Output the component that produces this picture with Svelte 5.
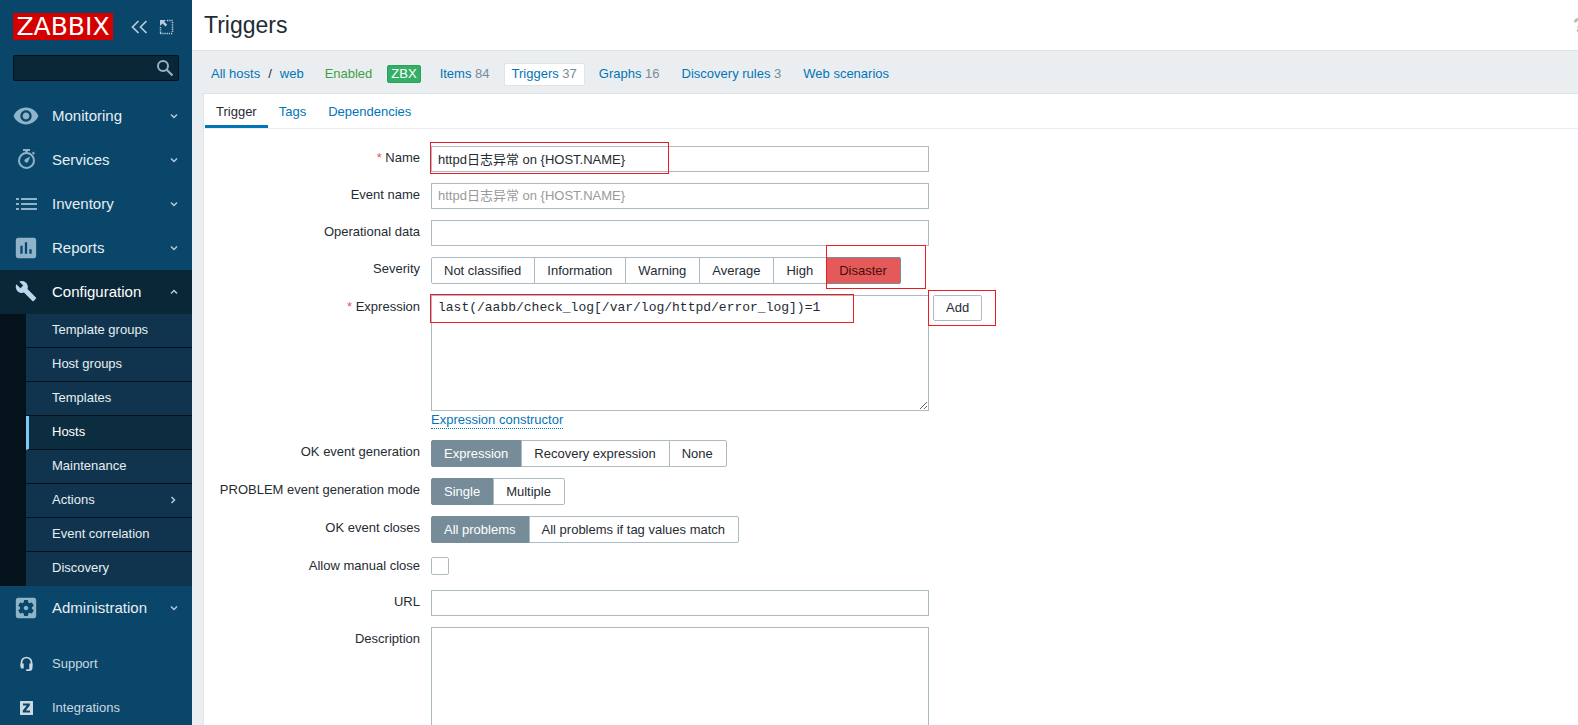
<script lang="ts">
  /**
   * Trigger configuration form with the main navigation sidebar.
   */
  type Tab = { label: string; count?: number; selected?: boolean };

  const hostTabs: Tab[] = [
    { label: 'Items', count: 84 },
    { label: 'Triggers', count: 37, selected: true },
    { label: 'Graphs', count: 16 },
    { label: 'Discovery rules', count: 3 },
    { label: 'Web scenarios' }
  ];

  const formTabs = ['Trigger', 'Tags', 'Dependencies'];

  const mainMenu = ['Monitoring', 'Services', 'Inventory', 'Reports', 'Configuration', 'Administration'];

  const configurationMenu = [
    'Template groups',
    'Host groups',
    'Templates',
    'Hosts',
    'Maintenance',
    'Actions',
    'Event correlation',
    'Discovery'
  ];

  const severities = ['Not classified', 'Information', 'Warning', 'Average', 'High', 'Disaster'];
  const okEventModes = ['Expression', 'Recovery expression', 'None'];
  const problemModes = ['Single', 'Multiple'];
  const closeModes = ['All problems', 'All problems if tag values match'];

  // Form state
  let search = $state('');
  let activeTab = $state('Trigger');
  let openMenu = $state('Configuration');
  let name = $state('httpd日志异常 on {HOST.NAME}');
  let eventName = $state('');
  let operationalData = $state('');
  let severity = $state('Disaster');
  let expression = $state('last(/aabb/check_log[/var/log/httpd/error_log])=1');
  let okEvent = $state('Expression');
  let problemMode = $state('Single');
  let closeMode = $state('All problems');
  let manualClose = $state(false);
  let url = $state('');
  let description = $state('');

  function toggleMenu(item: string) {
    openMenu = openMenu === item ? '' : item;
  }
</script>

{#snippet menuIcon(item: string)}
  {#if item === 'Monitoring'}
    <svg class="menu-icon" viewBox="0.5 0.5 23 23" aria-hidden="true">
      <path d="M12 4.5C7 4.5 2.73 7.61 1 12c1.73 4.39 6 7.5 11 7.5s9.27-3.11 11-7.5c-1.73-4.39-6-7.5-11-7.5zM12 17c-2.76 0-5-2.24-5-5s2.24-5 5-5 5 2.24 5 5-2.24 5-5 5zm0-8c-1.66 0-3 1.34-3 3s1.34 3 3 3 3-1.34 3-3-1.34-3-3-3z" />
    </svg>
  {:else if item === 'Services'}
    <svg class="menu-icon" viewBox="0 0 26 26" aria-hidden="true">
      <path d="M10 2h7v2h-2.200v1.500h-2.600V4H10z" />
      <path d="M20.400 4.600l1.600 1.600-1.500 1.500-1.600-1.600z" />
      <circle cx="13.500" cy="13.500" r="7.500" fill="none" stroke="currentColor" stroke-width="2" />
      <path d="M17.300 9.500l-2.200 5.200a2 2 0 1 1-2.900-2.700z" />
    </svg>
  {:else if item === 'Inventory'}
    <svg class="menu-icon" viewBox="0 0 26 26" aria-hidden="true">
      <path d="M3 7h3v2H3zM8 7h16v2H8zM3 12h3v2H3zM8 12h16v2H8zM3 17h3v2H3zM8 17h16v2H8z" />
    </svg>
  {:else if item === 'Reports'}
    <svg class="menu-icon" viewBox="0.5 0.5 23 23" aria-hidden="true">
      <path d="M19 3H5c-1.1 0-2 .9-2 2v14c0 1.1.9 2 2 2h14c1.1 0 2-.9 2-2V5c0-1.1-.9-2-2-2zM9 17H7v-7h2v7zm4 0h-2V7h2v10zm4 0h-2v-4h2v4z" />
    </svg>
  {:else if item === 'Configuration'}
    <svg class="menu-icon" viewBox="-2 -1 28 28" aria-hidden="true">
      <path d="M22.7 19l-9.1-9.1c.9-2.3.4-5-1.5-6.9-2-2-5-2.4-7.4-1.3L9 6 6 9 1.6 4.7C.4 7.1.9 10.1 2.9 12.1c1.9 1.9 4.6 2.4 6.9 1.5l9.1 9.1c.4.4 1 .4 1.4 0l2.3-2.3c.5-.4.5-1.1.1-1.4z" />
    </svg>
  {:else}
    <svg class="menu-icon" viewBox="0.5 0.5 23 23" aria-hidden="true">
      <path d="M12 10c-1.1 0-2 .9-2 2s.9 2 2 2 2-.9 2-2-.9-2-2-2zm7-7H5c-1.11 0-2 .9-2 2v14c0 1.1.89 2 2 2h14c1.11 0 2-.9 2-2V5c0-1.1-.89-2-2-2zm-1.75 9c0 .23-.02.46-.05.68l1.48 1.16c.13.11.17.3.08.45l-1.4 2.42c-.09.15-.27.21-.43.15l-1.74-.7c-.36.28-.76.51-1.18.69l-.26 1.85c-.03.17-.18.3-.35.3h-2.8c-.17 0-.32-.13-.35-.29l-.26-1.85c-.43-.18-.82-.41-1.18-.69l-1.74.7c-.16.06-.34 0-.43-.15l-1.4-2.42c-.09-.15-.05-.34.08-.45l1.48-1.16c-.03-.23-.05-.46-.05-.69 0-.23.02-.46.05-.68l-1.48-1.16c-.13-.11-.17-.3-.08-.45l1.4-2.42c.09-.15.27-.21.43-.15l1.74.7c.36-.28.76-.51 1.18-.69l.26-1.85c.03-.17.18-.3.35-.3h2.8c.17 0 .32.13.35.29l.26 1.85c.43.18.82.41 1.18.69l1.74-.7c.16-.06.34 0 .43.15l1.4 2.42c.09.15.05.34-.08.45l-1.48 1.16c.03.23.05.46.05.69z" />
    </svg>
  {/if}
{/snippet}

{#snippet radioOption(group: string, option: string, current: string, select: (value: string) => void)}
  <input
    type="radio"
    id="{group}-{option}"
    name={group}
    value={option}
    checked={current === option}
    onchange={() => select(option)}
  />
  <label for="{group}-{option}">{option}</label>
{/snippet}

<div class="layout">
  <aside class="sidebar">
    <div class="sidebar-header">
      <a class="logo" href="#dashboard">ZABBIX</a>
      <button class="icon-button" aria-label="Collapse sidebar">
        <svg width="18" height="14" viewBox="0 0 18 14" fill="none" stroke="currentColor" stroke-width="1.7">
          <path d="M8.500 1L2.500 7l6 6M16.500 1l-6 6 6 6" />
        </svg>
      </button>
      <button class="icon-button" aria-label="Hide sidebar">
        <svg width="15" height="16" viewBox="0 0 15 16" fill="none" stroke="currentColor">
          <path d="M8 1.500h6M13.500 3v11M1.500 8v6M1 14.500h13" stroke-width="1.500" stroke-dasharray="1.300 0.900" />
          <path d="M1 1h6L5.200 2.800l3 3-1.700 1.700-3-3L1 7z" fill="currentColor" stroke="none" />
        </svg>
      </button>
    </div>

    <form class="search" role="search">
      <input type="text" aria-label="Search" bind:value={search} />
      <button type="submit" aria-label="Search">
        <svg width="18" height="18" viewBox="0 0 18 18" fill="none" stroke="currentColor">
          <circle cx="7" cy="7" r="5" stroke-width="2" />
          <path d="M10.500 10.500l6 6" stroke-width="2.200" />
        </svg>
      </button>
    </form>

    <nav aria-label="Main navigation">
      <ul class="menu">
        {#each mainMenu as item}
          <li class:open={openMenu === item}>
            <button class="menu-item" aria-expanded={openMenu === item} onclick={() => toggleMenu(item)}>
              {@render menuIcon(item)}
              <span>{item}</span>
              <svg class="arrow" class:up={openMenu === item} viewBox="0 0 8 8" aria-hidden="true">
                <path d="M1 2.500l3 3 3-3" />
              </svg>
            </button>
            {#if item === 'Configuration' && openMenu === item}
              <ul class="submenu">
                {#each configurationMenu as entry}
                  <li>
                    <a href="#{entry}" class:selected={entry === 'Hosts'}>
                      {entry}
                      {#if entry === 'Actions'}
                        <svg class="arrow" viewBox="0 0 8 8" aria-hidden="true">
                          <path d="M2.500 1l3 3-3 3" />
                        </svg>
                      {/if}
                    </a>
                  </li>
                {/each}
              </ul>
            {/if}
          </li>
        {/each}
      </ul>

      <ul class="menu user-menu">
        <li>
          <a class="user-item" href="#support">
            <svg class="menu-icon" viewBox="0 0 26 26" aria-hidden="true">
              <path d="M8.500 15v-3.500a5 5 0 0 1 10 0V15" fill="none" stroke="currentColor" stroke-width="1.700" />
              <path d="M7.500 12.500h3.200v5H9a1.500 1.500 0 0 1-1.500-1.500zM16.300 12.500h3.200v4.200q0 3.300-3.300 3.300h-3v-1.700h3.100z" />
            </svg>
            <span>Support</span>
          </a>
        </li>
        <li>
          <a class="user-item" href="#integrations">
            <svg class="menu-icon" viewBox="0 0 26 26" aria-hidden="true">
              <path fill-rule="evenodd" d="M7.500 6h12a.5.5 0 0 1 .5.500v13a.5.5 0 0 1-.5.500h-12a.5.5 0 0 1-.5-.500v-13a.5.5 0 0 1 .5-.500zM10 8.500v2h3.800l-4 5v2h7.200v-2h-4.200l4-5v-2z" />
            </svg>
            <span>Integrations</span>
          </a>
        </li>
      </ul>
    </nav>
  </aside>

  <main>
    <header class="page-header">
      <h1>Triggers</h1>
      <a class="help" href="#help" aria-label="Help">?</a>
    </header>

    <nav class="host-nav" aria-label="Host">
      <div class="breadcrumbs">
        <a href="#hosts">All hosts</a>
        <span>/</span>
        <a href="#web">web</a>
      </div>
      <span class="enabled">Enabled</span>
      <span class="badge">ZBX</span>
      <ul class="host-tabs">
        {#each hostTabs as tab}
          <li class:selected={tab.selected}>
            <a href="#{tab.label}">{tab.label}</a>{#if tab.count}&nbsp;<span class="count">{tab.count}</span>{/if}
          </li>
        {/each}
      </ul>
    </nav>

    <section class="panel">
      <div class="tabs" role="tablist">
        {#each formTabs as tab}
          <button role="tab" aria-selected={activeTab === tab} onclick={() => (activeTab = tab)}>{tab}</button>
        {/each}
      </div>

      <form class="form">
        <label for="name"><span class="required">*</span> Name</label>
        <div class="field">
          <input id="name" type="text" bind:value={name} />
          <span class="mark mark-name"></span>
        </div>

        <label for="event-name">Event name</label>
        <div class="field">
          <input id="event-name" type="text" placeholder={name} bind:value={eventName} />
        </div>

        <label for="opdata">Operational data</label>
        <div class="field">
          <input id="opdata" type="text" bind:value={operationalData} />
        </div>

        <span class="label" id="severity-label">Severity</span>
        <div class="segmented severity" role="radiogroup" aria-labelledby="severity-label">
          {#each severities as option}
            <div class="segment" class:disaster={option === 'Disaster'}>
              {@render radioOption('severity', option, severity, (value) => (severity = value))}
              {#if option === 'Disaster'}
                <span class="mark mark-severity"></span>
              {/if}
            </div>
          {/each}
        </div>

        <label for="expression"><span class="required">*</span> Expression</label>
        <div class="expression">
          <div class="field">
            <textarea id="expression" spellcheck="false" bind:value={expression}></textarea>
            <span class="mark mark-expression"></span>
          </div>
          <div class="add">
            <button type="button">Add</button>
            <span class="mark mark-add"></span>
          </div>
          <button type="button" class="link-button">Expression constructor</button>
        </div>

        <span class="label" id="ok-label">OK event generation</span>
        <div class="segmented" role="radiogroup" aria-labelledby="ok-label">
          {#each okEventModes as option}
            <div class="segment">{@render radioOption('ok-event', option, okEvent, (value) => (okEvent = value))}</div>
          {/each}
        </div>

        <span class="label" id="problem-label">PROBLEM event generation mode</span>
        <div class="segmented" role="radiogroup" aria-labelledby="problem-label">
          {#each problemModes as option}
            <div class="segment">{@render radioOption('problem', option, problemMode, (value) => (problemMode = value))}</div>
          {/each}
        </div>

        <span class="label" id="close-label">OK event closes</span>
        <div class="segmented" role="radiogroup" aria-labelledby="close-label">
          {#each closeModes as option}
            <div class="segment">{@render radioOption('closes', option, closeMode, (value) => (closeMode = value))}</div>
          {/each}
        </div>

        <label for="manual-close">Allow manual close</label>
        <div class="check">
          <input id="manual-close" type="checkbox" bind:checked={manualClose} />
        </div>

        <label for="url">URL</label>
        <div class="field">
          <input id="url" type="text" bind:value={url} />
        </div>

        <label for="description">Description</label>
        <div class="field">
          <textarea id="description" class="description" bind:value={description}></textarea>
        </div>
      </form>
    </section>
  </main>
</div>

<style>
  :global(body) {
    margin: 0;
    background: #ebeef0;
  }

  .layout {
    display: flex;
    height: 100vh;
    overflow: hidden;
    font-family: 'Liberation Sans', Arial, 'Noto Sans CJK SC', sans-serif;
    font-size: 13px;
    line-height: 16px;
    color: #1f2c33;
  }

  .layout *,
  .layout *::before {
    box-sizing: border-box;
  }

  button,
  input,
  textarea {
    margin: 0;
    font: inherit;
    color: inherit;
  }

  button {
    padding: 0;
    border: none;
    background: none;
    cursor: pointer;
  }

  a {
    color: #0275b8;
    text-decoration: none;
  }

  ul {
    margin: 0;
    padding: 0;
    list-style: none;
  }

  /* Sidebar */
  .sidebar {
    flex: 0 0 192px;
    overflow: hidden;
    background: #0a466a;
    color: #e6eef2;
  }

  .sidebar-header {
    display: flex;
    align-items: center;
    gap: 11px;
    padding: 13px 13px 0;
  }

  .logo {
    width: 100px;
    margin-right: 6px;
    background: #d40000;
    color: #fff;
    font-family: 'DejaVu Sans', sans-serif;
    font-size: 25px;
    line-height: 27px;
    text-align: center;
  }

  .icon-button {
    display: flex;
    color: #b6cbd8;
  }

  .search {
    display: flex;
    align-items: center;
    height: 26px;
    margin: 15px 13px 13px;
    padding-right: 4px;
    background: #0a2738;
    border: 1px solid #03121b;
    border-radius: 2px;
  }

  .search input {
    flex: 1;
    min-width: 0;
    border: none;
    outline: none;
    background: transparent;
  }

  .search button {
    display: flex;
    color: #8fb3c9;
  }

  .menu-item,
  .user-item {
    display: flex;
    align-items: center;
    gap: 13px;
    width: 100%;
    height: 44px;
    padding: 0 14px 0 13px;
    text-align: left;
  }

  .menu-item {
    font-size: 15px;
  }

  .menu-item span {
    flex: 1;
  }

  .menu-icon {
    width: 26px;
    height: 26px;
    color: #8fb3c9;
    fill: currentColor;
  }

  .arrow {
    width: 8px;
    height: 8px;
    fill: none;
    stroke: #b6cbd8;
    stroke-width: 1.5;
  }

  .arrow.up {
    transform: rotate(180deg);
  }

  .open {
    background: #03121b;
  }

  .open .menu-item {
    background: #0a2738;
    color: #fff;
  }

  .open .menu-icon {
    color: #b9d7ec;
  }

  .submenu {
    margin-left: 26px;
    background: #10344d;
  }

  .submenu a {
    display: flex;
    align-items: center;
    justify-content: space-between;
    height: 34px;
    padding: 1px 15px 2px 26px;
    border-bottom: 1px solid #03121b;
    color: #e6eef2;
  }

  .submenu li:last-child a {
    border-bottom-color: #10344d;
  }

  .submenu a.selected {
    padding-left: 23px;
    border-left: 3px solid #7cc8fa;
    background: #0c2d40;
    color: #fff;
  }

  .user-menu {
    margin-top: 12px;
  }

  .user-item,
  .user-item .menu-icon {
    color: #cbd9e1;
  }

  /* Page header */
  main {
    flex: 1;
    min-width: 0;
    overflow: hidden;
  }

  .page-header {
    display: flex;
    align-items: center;
    justify-content: space-between;
    height: 51px;
    padding-left: 12px;
    background: #fff;
    border-bottom: 1px solid #dfe4e7;
  }

  h1 {
    margin: 0;
    font-size: 23px;
    font-weight: 400;
    line-height: 28px;
  }

  .help {
    margin-right: -7px;
    color: #acbbc2;
    font-size: 20px;
    font-weight: 700;
  }

  .host-nav {
    display: flex;
    align-items: center;
    height: 42px;
    padding: 4px 19px 0;
  }

  .breadcrumbs {
    display: flex;
    gap: 8px;
  }

  .enabled {
    margin-left: 21px;
    color: #429e47;
  }

  .badge {
    margin: 0 11px 0 15px;
    padding: 0 3px;
    border: 1px solid #2f9f5e;
    border-radius: 2px;
    background: #34af67;
    color: #fff;
  }

  .host-tabs {
    display: flex;
    gap: 6px;
  }

  .host-tabs li {
    padding: 2px 7px 3px;
    border: 1px solid transparent;
    border-radius: 2px;
    white-space: nowrap;
  }

  .host-tabs .selected {
    border-color: #dfe4e7;
    background: #fff;
  }

  .count {
    color: #768d99;
  }

  /* Form panel */
  .panel {
    margin-left: 11px;
    border: 1px solid #dfe4e7;
    border-right: none;
    background: #fff;
  }

  .tabs {
    display: flex;
    padding-left: 1px;
    border-bottom: 1px solid #ebeef0;
  }

  .tabs button {
    height: 34px;
    padding: 4px 11px 0;
    border-bottom: 3px solid transparent;
    color: #0275b8;
  }

  .tabs button[aria-selected='true'] {
    border-bottom-color: #0275b8;
    color: #1f2c33;
  }

  .form {
    display: grid;
    grid-template-columns: 216px minmax(0, 1fr);
    gap: 11px;
    align-items: start;
    padding: 17px 0 20px;
  }

  .form > label,
  .form > .label {
    padding-top: 4px;
    text-align: right;
  }

  .required {
    color: #e45959;
  }

  .field {
    position: relative;
    width: 498px;
    max-width: 100%;
  }

  .field input,
  .field textarea {
    display: block;
    width: 100%;
    padding: 0 6px;
    border: 1px solid #acbbc2;
    border-radius: 0;
    outline: none;
    background: #fff;
  }

  .field input {
    height: 26px;
    padding-bottom: 2px;
  }

  .field input::placeholder {
    color: #9a9a9a;
    opacity: 1;
  }

  .field textarea {
    height: 116px;
    padding: 4px 6px;
    font-family: 'Liberation Mono', 'Courier New', monospace;
    resize: both;
  }

  .field .description {
    height: 132px;
    font-family: inherit;
  }

  .segmented {
    display: flex;
    height: 27px;
  }

  .segment {
    position: relative;
    margin-right: -1px;
  }

  .segment input {
    position: absolute;
    inset: 0;
    margin: 0;
    opacity: 0;
  }

  .segment label {
    position: relative;
    display: block;
    height: 27px;
    padding: 5px 13px 4px 12px;
    border: 1px solid #acbbc2;
    background: #fff;
    white-space: nowrap;
    cursor: pointer;
  }

  .segment:first-child label {
    border-radius: 2px 0 0 2px;
  }

  .segment:last-child label {
    border-radius: 0 2px 2px 0;
  }

  .segment input:checked + label {
    border-color: #768d99;
    background: #768d99;
    color: #fff;
  }

  .segment.disaster input:checked + label {
    background: #e45959;
    color: #4b0c0c;
  }

  .expression {
    display: grid;
    grid-template-columns: minmax(0, 498px) auto;
    justify-content: start;
    column-gap: 4px;
  }

  .add {
    position: relative;
    height: 26px;
  }

  .add button {
    height: 26px;
    padding: 0 12px;
    border: 1px solid #acbbc2;
    border-radius: 2px;
    background: #fff;
  }

  .link-button {
    justify-self: start;
    height: 18px;
    border-bottom: 1px dotted #0275b8;
    color: #0275b8;
  }

  .check {
    display: flex;
    height: 25px;
    padding-top: 3px;
  }

  .check input {
    appearance: none;
    width: 18px;
    height: 18px;
    border: 1px solid #acbbc2;
    border-radius: 2px;
    background: #fff;
  }

  .check input:checked {
    background: #0275b8;
  }

  /* Red frames drawn over the fields to fill in */
  .mark {
    position: absolute;
    z-index: 1;
    border: 1px solid #ed1c24;
    pointer-events: none;
  }

  .mark-name {
    top: -4px;
    left: -1px;
    width: 239px;
    height: 32px;
  }

  .mark-severity {
    top: -12px;
    left: 0;
    width: 100px;
    height: 44px;
  }

  .mark-expression {
    top: -1px;
    left: -1px;
    width: 424px;
    height: 29px;
  }

  .mark-add {
    top: -5px;
    left: -5px;
    width: 68px;
    height: 36px;
  }
</style>
